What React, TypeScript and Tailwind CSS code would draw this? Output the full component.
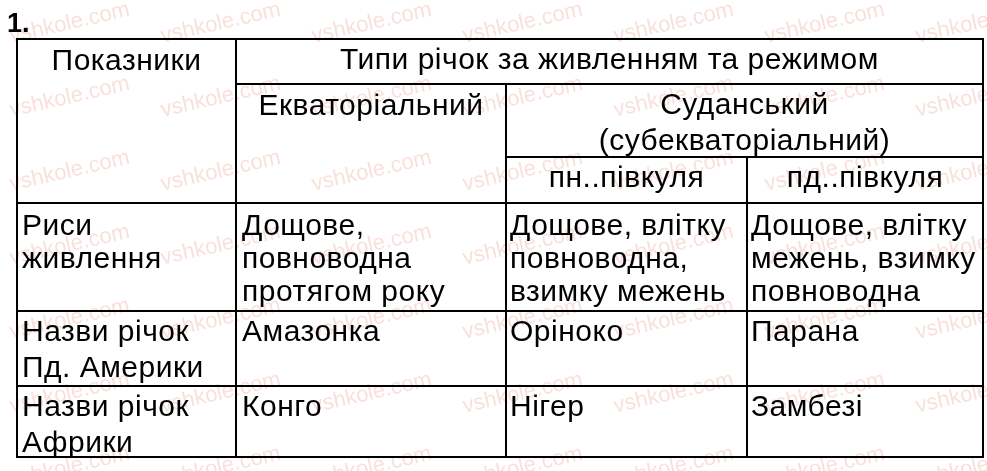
import React from 'react'

const font = { fontFamily: '"Liberation Sans", Arial, sans-serif' }

// Рядки тіла таблиці: кожна клітинка — масив рядків тексту
const rows: { lead: string; cells: string[][] }[] = [
  {
    lead: 'pt-[4px] leading-[33px]',
    cells: [
      ['Риси', 'живлення'],
      ['Дощове,', 'повноводна', 'протягом року'],
      ['Дощове, влітку', 'повноводна,', 'взимку межень'],
      ['Дощове, влітку', 'межень, взимку', 'повноводна'],
    ],
  },
  {
    lead: 'pt-[1px] leading-[36px]',
    cells: [['Назви річок', 'Пд. Америки'], ['Амазонка'], ['Оріноко'], ['Парана']],
  },
  {
    lead: 'pt-[1px] leading-[36px]',
    cells: [['Назви річок', 'Африки'], ['Конго'], ['Нігер'], ['Замбезі']],
  },
]

const padX = ['pl-[4px]', 'pl-[5px]', 'pl-[3px]', 'pl-[3px]']

function Lines({ lines }: { lines: string[] }) {
  return (
    <>
      {lines.map((l, i) => (
        <span key={i} className="block whitespace-nowrap">
          {l}
        </span>
      ))}
    </>
  )
}

// Водяні знаки поверх сторінки (multiply — чорні лінії лишаються чорними)
function Watermarks() {
  const ys = [7, 81, 155, 229, 303, 377, 451]
  const xs = [10, 161, 312, 463, 614, 765, 916]
  return (
    <div className="pointer-events-none absolute inset-0 mix-blend-multiply">
      {ys.map((y) =>
        xs.map((x) => (
          <span
            key={`${x}-${y}`}
            className="absolute origin-left -rotate-[13deg] whitespace-nowrap text-[22px] leading-none text-[#f9e0dc]"
            style={{ left: x, top: y + 18 }}
          >
            vshkole.com
          </span>
        )),
      )}
    </div>
  )
}

export default function App() {
  return (
    <div className="relative h-[471px] w-[987px] overflow-hidden bg-white text-black" style={font}>
      <div className="h-[38px] pl-[7px] pt-[10px] text-[27px] font-bold leading-none">1.</div>

      <div className="ml-[16px] grid w-[968px] grid-cols-[217px_268px_239px_234px] grid-rows-[43px_71px_44px_106px_73px_69px] gap-[2px] bg-black p-[2px] text-[30px] leading-[35px] tracking-[0.5px]">
        <div className="row-span-3 bg-white pt-[2px] text-center">Показники</div>
        <div className="col-span-3 bg-white pt-[1px] text-center">Типи річок за живленням та режимом</div>
        <div className="row-span-2 bg-white pt-[2px] text-center">Екваторіальний</div>
        <div className="col-span-2 bg-white pt-[1px] text-center leading-[36px]">
          Суданський
          <br />
          (субекваторіальний)
        </div>
        <div className="bg-white pt-[1px] text-center">пн..півкуля</div>
        <div className="bg-white pt-[1px] text-center">пд..півкуля</div>

        {rows.map((row, r) =>
          row.cells.map((cell, c) => (
            <div key={`${r}-${c}`} className={`bg-white ${padX[c]} ${row.lead}`}>
              <Lines lines={cell} />
            </div>
          )),
        )}
      </div>

      <Watermarks />
    </div>
  )
}
